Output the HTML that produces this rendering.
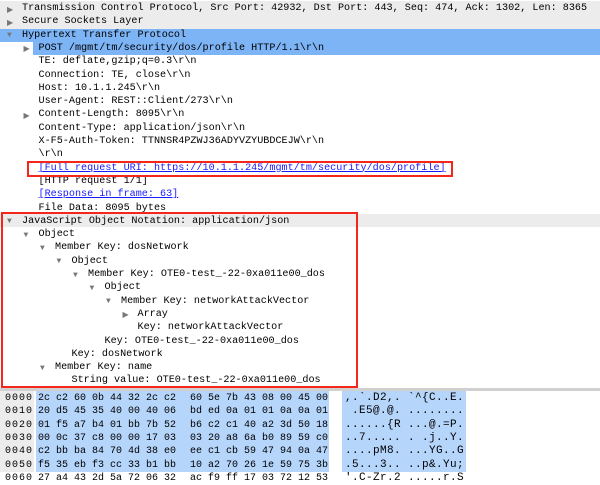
<!DOCTYPE html>
<html><head><style>
body{margin:0;width:600px;height:472px;overflow:hidden;background:#fff;font-family:"Liberation Mono",monospace;font-size:10.15px;color:#000;position:relative}
.r{position:absolute;left:0;width:600px;height:13.3px;line-height:13.3px;white-space:pre}
.t{position:absolute;white-space:pre}
.h{position:absolute;white-space:pre;font-size:10px}
.tri{position:absolute;font-size:8px;color:#777}
.g{background:#ececec}
a{color:#1a1aff;text-decoration:underline}
.box{position:absolute;border:2px solid #f4271a;box-sizing:border-box}
</style></head><body>
<div class="r g" style="top:1px;height:28px"></div>
<div class="r" style="top:29px;background:#7cb4f5"></div>
<div class="r" style="top:42px;left:33px;width:567px;background:#7cb4f5"></div>
<div class="r g" style="top:214px"></div>
<div id="tree"></div>
<div class="box" style="left:27px;top:161px;width:426px;height:16px"></div>
<div class="box" style="left:1px;top:212px;width:357px;height:176px"></div>
<div style="position:absolute;left:0;top:388px;width:600px;height:3px;background:#d0d0d0"></div>
<div style="position:absolute;left:0;top:391px;width:34px;height:81px;background:#ececec"></div>
<div style="position:absolute;left:36px;top:391px;width:293px;height:81px;background:#b5d5fb"></div>
<div style="position:absolute;left:342px;top:391px;width:124px;height:81px;background:#b5d5fb"></div>
<div id="hex"></div>
<script>
var rows=[
[0,1,"Transmission Control Protocol, Src Port: 42932, Dst Port: 443, Seq: 474, Ack: 1302, Len: 8365"],
[0,1,"Secure Sockets Layer"],
[0,2,"Hypertext Transfer Protocol"],
[1,1,"POST /mgmt/tm/security/dos/profile HTTP/1.1\\r\\n"],
[1,0,"TE: deflate,gzip;q=0.3\\r\\n"],
[1,0,"Connection: TE, close\\r\\n"],
[1,0,"Host: 10.1.1.245\\r\\n"],
[1,0,"User-Agent: REST::Client/273\\r\\n"],
[1,1,"Content-Length: 8095\\r\\n"],
[1,0,"Content-Type: application/json\\r\\n"],
[1,0,"X-F5-Auth-Token: TTNNSR4PZWJ36ADYVZYUBDCEJW\\r\\n"],
[1,0,"\\r\\n"],
[1,3,"[Full request URI: https://10.1.1.245/mgmt/tm/security/dos/profile]"],
[1,0,"[HTTP request 1/1]"],
[1,3,"[Response in frame: 63]"],
[1,0,"File Data: 8095 bytes"],
[0,2,"JavaScript Object Notation: application/json"],
[1,2,"Object"],
[2,2,"Member Key: dosNetwork"],
[3,2,"Object"],
[4,2,"Member Key: OTE0-test_-22-0xa011e00_dos"],
[5,2,"Object"],
[6,2,"Member Key: networkAttackVector"],
[7,1,"Array"],
[7,0,"Key: networkAttackVector"],
[5,0,"Key: OTE0-test_-22-0xa011e00_dos"],
[3,0,"Key: dosNetwork"],
[2,2,"Member Key: name"],
[3,0,"String value: OTE0-test_-22-0xa011e00_dos"]];
var h="";
rows.forEach(function(r,i){
 var top=2+13.3*i, x=22+16.5*r[0];
 var txt=r[2].replace(/&/g,"&amp;").replace(/</g,"&lt;");
 if(r[1]==3) txt='<a>'+txt+'</a>';
 h+='<div class="t" style="left:'+x+'px;top:'+top+'px;line-height:13.3px">'+txt+'</div>';
 if(r[1]==1) h+='<div class="tri" style="left:'+(x-15)+'px;top:'+(top+2.5)+'px">&#9654;</div>';
 if(r[1]==2) h+='<div class="tri" style="left:'+(x-15)+'px;top:'+(top+2.5)+'px">&#9660;</div>';
});
document.getElementById("tree").innerHTML=h;
var hx=[
["0000","2c c2 60 0b 44 32 2c c2","60 5e 7b 43 08 00 45 00",",.`.D2,.","`^{C..E."],
["0010","20 d5 45 35 40 00 40 06","bd ed 0a 01 01 0a 0a 01"," .E5@.@.","........"],
["0020","01 f5 a7 b4 01 bb 7b 52","b6 c2 c1 40 a2 3d 50 18","......{R","...@.=P."],
["0030","00 0c 37 c8 00 00 17 03","03 20 a8 6a b0 89 59 c0","..7.....",". .j..Y."],
["0040","c2 bb ba 84 70 4d 38 e0","ee c1 cb 59 47 94 0a 47","....pM8.","...YG..G"],
["0050","f5 35 eb f3 cc 33 b1 bb","10 a2 70 26 1e 59 75 3b",".5...3..","..p&.Yu;"],
["0060","27 a4 43 2d 5a 72 06 32","ac f9 ff 17 03 72 12 53","'.C-Zr.2",".....r.S"]];
h="";
hx.forEach(function(r,i){
 var top=392+13.3*i;
 function t(x,s,st){h+='<div class="h" style="left:'+x+'px;top:'+top+'px;line-height:13.3px;'+(st||'')+'">'+s.replace(/&/g,"&amp;")+'</div>';}
 t(5,r[0],'letter-spacing:1px');t(38,r[1]);t(190,r[2]);t(345,r[3]+" "+r[4],'font-size:11px;letter-spacing:0.4px');
});
document.getElementById("hex").innerHTML=h;
</script>
</body></html>
